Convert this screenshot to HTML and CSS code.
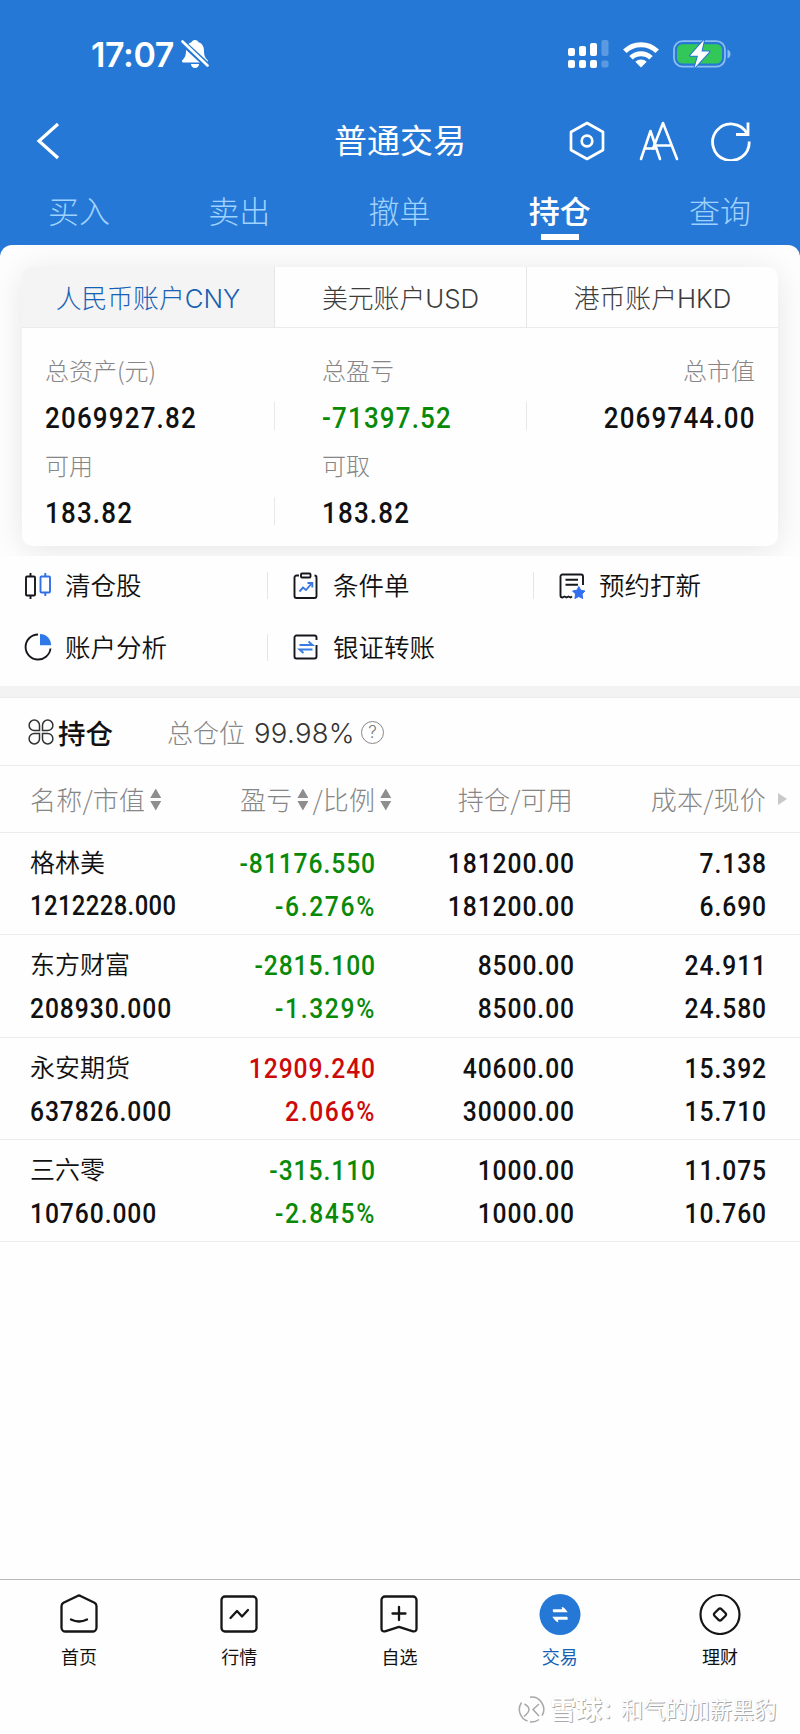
FILE: index.html
```html
<!DOCTYPE html>
<html lang="zh-CN">
<head>
<meta charset="UTF-8" />
<meta name="viewport" content="width=device-width, initial-scale=1" />
<title>普通交易</title>
<link rel="stylesheet" href="styles.css">
</head>
<body>
  <header>
    <div class="status-bar">
      <span class="time">17:07</span>
      <svg class="bell" width="28" height="30" viewBox="0 0 28 30">
        <path d="M14 1c-2 0-3.200 1-3.500 2.300C6.500 4.500 5 8 5 12c0 5-1.500 7-3.500 9-1 1.300-.5 2.500 1 2.500h23c1.500 0 2-1.200 1-2.500-2-2-3.500-4-3.500-9 0-4-1.500-7.500-5.500-8.700C17.200 2 16 1 14 1z" fill="#fff"/>
        <path d="M9.800 25h8.400c-.5 2.500-2 4-4.200 4s-3.700-1.500-4.200-4z" fill="#fff"/>
        <path d="M1 3l26 24" stroke="#2578d6" stroke-width="6"/>
        <path d="M1.500 2.500l25 24" stroke="#fff" stroke-width="2.600" stroke-linecap="round"/>
      </svg>
      <svg class="signal" width="41" height="28" viewBox="0 0 41 28" fill="#fff">
        <rect x="0" y="8" width="7" height="8" rx="2"/>
        <rect x="11" y="6" width="7" height="10" rx="2"/>
        <rect x="22" y="3" width="7" height="13" rx="2"/>
        <rect x="33.500" y="0" width="7" height="16" rx="2" opacity=".25"/>
        <rect x="0" y="20" width="7" height="8" rx="2"/>
        <rect x="11" y="20" width="7" height="8" rx="2"/>
        <rect x="22" y="20" width="7" height="8" rx="2"/>
        <rect x="33.500" y="20.500" width="7" height="7" rx="2" opacity=".25"/>
      </svg>
      <svg class="wifi" width="36" height="27" viewBox="0 0 36 27" fill="none" stroke="#fff" stroke-width="5">
        <path d="M1.800 10.300a23 23 0 0 1 32.400 0"/>
        <path d="M8 16.700a14.500 14.500 0 0 1 20 0"/>
        <path d="M18 26.500l-5.700-5.800a8.200 8.200 0 0 1 11.400 0z" fill="#fff" stroke="none"/>
      </svg>
      <svg class="battery" width="58" height="28" viewBox="0 0 58 28">
        <rect x="1" y="1.200" width="51" height="25.400" rx="8.500" fill="none" stroke="#8cbcf0" stroke-width="1.800"/>
        <rect x="4" y="4.200" width="45" height="19.400" rx="5.500" fill="#33c759"/>
        <path d="M54.500 9.500q3 1.200 3 4.400t-3 4.400z" fill="#8cbcf0"/>
        <path d="M31 0L17 15.700h8L21.500 28 36.500 11.500h-8z" fill="#fff" stroke="#2578d6" stroke-width="2" paint-order="stroke" stroke-linejoin="round"/>
      </svg>
    </div>

    <div class="title-bar">
      <svg class="back" width="24" height="38" viewBox="0 0 24 38" fill="none" stroke="#fff" stroke-width="3.200">
        <path d="M22 2L3 19l19 17"/>
      </svg>
      <h1>普通交易</h1>
      <div class="tools">
        <svg width="40" height="40" viewBox="0 0 40 40" fill="none" stroke="#fff" stroke-width="2.700" stroke-linejoin="round">
          <path d="M20 2l16 9v18l-16 9-16-9V11z"/>
          <circle cx="20" cy="20" r="5.300"/>
        </svg>
        <svg width="40" height="40" viewBox="0 0 40 40" fill="none" stroke="#fff" stroke-width="2.600" stroke-linecap="round" stroke-linejoin="round">
          <path d="M2 38l9.500-28L21 38M5.500 27.500h11.500"/>
          <path d="M14 27.500L24 2l14 36M17.500 24.500h15"/>
        </svg>
        <svg width="40" height="40" viewBox="0 0 40 40" fill="none" stroke="#fff" stroke-width="2.800">
          <path d="M38.200 20.500A18.300 18.300 0 1 1 36 12.500"/>
          <path d="M37 1.500v12H25"/>
        </svg>
      </div>
    </div>

    <nav class="trade-tabs">
      <a>买入</a>
      <a>卖出</a>
      <a>撤单</a>
      <a class="active">持仓</a>
      <a>查询</a>
    </nav>
  </header>

  <main>
    <section class="account">
      <div class="account-card">
        <div class="account-tabs">
          <a class="active">人民币账户CNY</a>
          <a>美元账户USD</a>
          <a>港币账户HKD</a>
        </div>
        <div class="account-grid">
          <div class="cell">
            <label>总资产(元)</label>
            <strong><span>2069927.82</span></strong>
          </div>
          <div class="cell">
            <label>总盈亏</label>
            <strong class="down"><span>-71397.52</span></strong>
          </div>
          <div class="cell right">
            <label>总市值</label>
            <strong><span>2069744.00</span></strong>
          </div>
          <div class="cell">
            <label>可用</label>
            <strong><span>183.82</span></strong>
          </div>
          <div class="cell last">
            <label>可取</label>
            <strong><span>183.82</span></strong>
          </div>
        </div>
      </div>
    </section>

    <section class="shortcuts">
      <a class="sep">
        <svg width="28" height="28" viewBox="0 0 28 28" fill="none" stroke="#15171c" stroke-width="1.900">
          <rect x="2" y="4.500" width="9" height="19" rx="1"/>
          <path d="M6.500 1v3.500M6.500 23.500V27"/>
          <g stroke="#2f6fe8"><rect x="16.500" y="4.500" width="9.500" height="16" rx="1"/><path d="M21.300 1v3.500M21.300 20.500V24"/></g>
        </svg>
        <span>清仓股</span>
      </a>
      <a class="sep">
        <svg width="28" height="28" viewBox="0 0 28 28" fill="none" stroke="#15171c" stroke-width="1.900">
          <path d="M7 3.500H4.500a2 2 0 0 0-2 2V24a2 2 0 0 0 2 2h18a2 2 0 0 0 2-2V5.500a2 2 0 0 0-2-2"/>
          <rect x="9" y="1.500" width="9.500" height="4" rx="1"/>
          <g stroke="#3a76e0"><path d="M7.500 19.500l3.500-4 3 2.500 6-7"/><path d="M15.500 11h4.800v4.500"/></g>
        </svg>
        <span>条件单</span>
      </a>
      <a>
        <svg width="28" height="28" viewBox="0 0 28 28" fill="none" stroke="#15171c" stroke-width="1.900">
          <path d="M25 13V4.500a2 2 0 0 0-2-2H4.500a2 2 0 0 0-2 2V23.500a2 2 0 0 0 2 2l2-1 2 1 2-1 2 1 1.500-1"/>
          <path d="M7.500 7.800h12.500M7.500 12.700h12.500"/>
          <path d="M20.800 14.500l2 3.800 4.200.7-3 3 .7 4.500-3.900-2-3.900 2 .7-4.500-3-3 4.200-.7z" fill="#2f6ff0" stroke="#2f6ff0" stroke-width="1" stroke-linejoin="round"/>
        </svg>
        <span>预约打新</span>
      </a>
      <a class="sep">
        <svg width="28" height="28" viewBox="0 0 28 28" fill="none">
          <path d="M14 1.500a12.500 12.500 0 1 0 12.500 14" stroke="#15171c" stroke-width="1.900"/>
          <path d="M16 1a11 11 0 0 1 11 11.200H16z" fill="#2f78e8"/>
        </svg>
        <span>账户分析</span>
      </a>
      <a>
        <svg width="28" height="28" viewBox="0 0 28 28" fill="none" stroke="#15171c" stroke-width="1.900">
          <path d="M24.500 7V4.500a2 2 0 0 0-2-2h-18a2 2 0 0 0-2 2v19a2 2 0 0 0 2 2h18a2 2 0 0 0 2-2V12"/>
          <g stroke="#3a7de0"><path d="M7.500 12h13L16.500 8.500M20.500 16.500h-13l4 3.500"/></g>
        </svg>
        <span>银证转账</span>
      </a>
    </section>

    <section class="holdings">
      <div class="holdings-head">
        <svg width="26" height="26" viewBox="0 0 26 26" fill="none" stroke="#333" stroke-width="1.500">
          <path d="M11.500 11.500H6.300A5.200 5.200 0 1 1 11.500 6.300z"/>
          <path d="M14.500 11.500h5.200a5.200 5.200 0 1 0-5.200-5.200z"/>
          <path d="M11.500 14.500H6.300a5.200 5.200 0 1 0 5.200 5.200z"/>
          <path d="M14.500 14.500h5.200a5.200 5.200 0 1 1-5.200 5.200z"/>
        </svg>
        <h2>持仓</h2>
        <span class="pos-label">总仓位</span>
        <span class="pos-value">99.98%</span>
        <span class="help">?</span>
      </div>

      <div class="row table-head">
        <div>名称/市值<i class="sort"></i></div>
        <div>盈亏<i class="sort"></i>/比例<i class="sort"></i></div>
        <div>持仓/可用</div>
        <div>成本/现价<i class="more"></i></div>
      </div>

      <div class="row">
        <div><b>格林美</b><span class="long">1212228.000</span></div>
        <div class="down"><span>-81176.550</span><span class="rate">-6.276%</span></div>
        <div><span>181200.00</span><span>181200.00</span></div>
        <div><span>7.138</span><span>6.690</span></div>
      </div>
      <div class="row">
        <div><b>东方财富</b><span>208930.000</span></div>
        <div class="down"><span>-2815.100</span><span class="rate">-1.329%</span></div>
        <div><span>8500.00</span><span>8500.00</span></div>
        <div><span>24.911</span><span>24.580</span></div>
      </div>
      <div class="row">
        <div><b>永安期货</b><span>637826.000</span></div>
        <div class="up"><span>12909.240</span><span class="rate">2.066%</span></div>
        <div><span>40600.00</span><span>30000.00</span></div>
        <div><span>15.392</span><span>15.710</span></div>
      </div>
      <div class="row">
        <div><b>三六零</b><span>10760.000</span></div>
        <div class="down"><span>-315.110</span><span class="rate">-2.845%</span></div>
        <div><span>1000.00</span><span>1000.00</span></div>
        <div><span>11.075</span><span>10.760</span></div>
      </div>
    </section>
  </main>

  <footer>
    <nav class="bottom-nav">
      <a>
        <svg width="42" height="42" viewBox="0 0 42 42" fill="none" stroke="#151515" stroke-width="2.300" stroke-linecap="round" stroke-linejoin="round">
          <path d="M19.500 3Q21 2 22.500 3l14 6.800q2 1.200 2 3.400V34.500a4 4 0 0 1-4 4h-27a4 4 0 0 1-4-4V13.200q0-2.200 2-3.400z"/>
          <path d="M13 26.500q8 4 16 0"/>
        </svg>
        首页
      </a>
      <a>
        <svg width="42" height="42" viewBox="0 0 42 42" fill="none" stroke="#151515" stroke-width="2.300" stroke-linecap="round" stroke-linejoin="round">
          <rect x="3.500" y="3.500" width="35" height="35" rx="3.500"/>
          <path d="M12.500 25l6.500-7 5 5.500 6-6.500"/>
        </svg>
        行情
      </a>
      <a>
        <svg width="42" height="42" viewBox="0 0 42 42" fill="none" stroke="#151515" stroke-width="2.300" stroke-linecap="round" stroke-linejoin="round">
          <path d="M7 3.500h28a3.500 3.500 0 0 1 3.500 3.500v28.500q0 3.500-3.500 2.800l-14-4.500-14 4.500q-3.500.7-3.500-2.800V7A3.500 3.500 0 0 1 7 3.500z"/>
          <path d="M14.500 20.500h13M21 14v13"/>
        </svg>
        自选
      </a>
      <a class="active">
        <svg width="42" height="42" viewBox="0 0 42 42">
          <circle cx="21" cy="21.500" r="20.500" fill="#2578d6"/>
          <path d="M14 16.300h9l-.3-2.300q2.500 0 6 5.200H14.500q-1.300-1-.5-2.900zM28.500 26.800h-9.500l.3 2.600q-2.500-.5-6-5.600h14.700q1.300 1 .5 3z" fill="#fff"/>
        </svg>
        交易
      </a>
      <a>
        <svg width="42" height="42" viewBox="0 0 42 42" fill="none" stroke="#151515" stroke-width="2.200">
          <circle cx="21" cy="21.500" r="19.500"/>
          <rect x="16.200" y="16.700" width="9.600" height="9.600" rx="2" transform="rotate(45 21 21.500)"/>
        </svg>
        理财
      </a>
    </nav>
    <div class="watermark">
      <svg width="27" height="27" viewBox="0 0 27 27" fill="none" stroke="#a8a8a8" stroke-width="1.500">
        <path d="M3.500 6.500a12.300 12.300 0 0 0 6 18.500M12 1.200a12.300 12.300 0 0 1 12 18.500M21 23.500a12.300 12.300 0 0 1-9 2.300"/>
        <path d="M6.500 8q4.500 2.500 4.500 5.500T6 20.500M21 8l-6 5.500 6 6.500"/>
      </svg>
      <em>雪球</em><span class="colon">：</span><span>和气的加薪黑豹</span>
    </div>
  </footer>
</body>
</html>
```

FILE: styles.css
```css
* {
  box-sizing: border-box;
}
body {
  margin: 0;
  width: 800px;
  height: 1734px;
  display: flex;
  flex-direction: column;
  background: #fefefe;
  color: #111;
  font-family: 'Noto Sans CJK SC', sans-serif;
  font-weight: 300;
}
h1, h2 {
  margin: 0;
}
svg {
  display: block;
  flex: none;
}
header {
  background: #2578d6;
  height: 257px;
  flex: none;
}

/* phone status bar */
.status-bar {
  display: flex;
  align-items: center;
  height: 108px;
  padding-left: 91px;
}
.time {
  width: 90px;
  font-family: Inter, sans-serif;
  font-size: 34px;
  font-weight: 600;
  letter-spacing: -0.4px;
  line-height: 44px;
  padding-top: 1px;
  color: #fff;
}
.signal {
  margin-left: 359px;
}
.wifi {
  margin-left: 14px;
}
.battery {
  margin-left: 14px;
}

.title-bar {
  display: grid;
  grid-template-columns: 1fr 140px 1fr;
  align-items: center;
  height: 66px;
  color: #fff;
}
.back {
  margin-left: 36px;
}
h1 {
  padding-bottom: 3px;
  font-size: 33px;
  line-height: 45px;
  font-weight: 400;
  text-align: center;
  white-space: nowrap;
}
.tools {
  display: flex;
  justify-content: flex-end;
  gap: 32px;
  padding-right: 49px;
}
.trade-tabs {
  display: grid;
  grid-template-columns: repeat(5, 1fr);
  justify-items: center;
  margin-left: -1px;
  padding-top: 13px;
  font-size: 31px;
  line-height: 46px;
  color: #9fd2ff;
}
.trade-tabs .active {
  color: #fff;
  font-weight: 500;
}
.trade-tabs .active::after {
  content: '';
  display: block;
  width: 38px;
  height: 6px;
  margin: 1px auto 0;
  background: #fff;
}

/* account summary */
main {
  flex: 1;
  margin-top: -12px;
  background: #fefefe;
  border-radius: 12px 12px 0 0;
}
.account {
  height: 311px;
  padding: 22px 22px 0;
  overflow: hidden;
  border-radius: 12px 12px 0 0;
}
.account-card {
  height: 279px;
  background: #fefefe;
  border-radius: 10px;
  box-shadow: 0 4px 34px rgba(0, 0, 0, 0.1);
  overflow: hidden;
}
.account-tabs {
  display: grid;
  grid-template-columns: 252px 252px 1fr;
  height: 61px;
  border-bottom: 1px solid #ebebeb;
  font-family: Inter, 'Noto Sans CJK SC', sans-serif;
  font-size: 25.800px;
  line-height: 64px;
  text-align: center;
  color: #3c3c3c;
}
.account-tabs a {
  height: 60px;
}
.account-tabs a + a {
  border-left: 1px solid #e6e6e6;
}
.account-tabs .active {
  background: #f4f4f4;
  color: #1761b4;
}
.account-grid {
  display: grid;
  grid-template-columns: 253px 252px 1fr;
  padding-top: 24px;
}
.cell {
  height: 95px;
  padding-left: 23px;
}
.cell + .cell {
  padding-left: 47px;
}
.cell:nth-child(4) {
  padding-left: 23px;
}
.cell.right {
  padding: 0 23px 0 0;
  text-align: right;
}
.cell label {
  display: block;
  font-size: 24px;
  line-height: 36px;
  color: #868686;
}
.cell strong {
  display: block;
  height: 28px;
  margin-top: 14px;
  margin-bottom: 17px;
  font-family: Roboto, sans-serif;
  font-size: 29.500px;
  line-height: 32px;
  font-weight: 500;
  border-right: 1px solid #e8e8e8;
}
.cell.right strong, .cell.last strong {
  border-right: none;
}
/* narrow DIN-like digits */
.cell strong span {
  display: inline-block;
  letter-spacing: 1.350px;
  transform: scaleX(0.88);
  transform-origin: 0 50%;
}
.cell.right strong span {
  margin-right: -1px;
  transform-origin: 100% 50%;
}
.down, .cell .down {
  color: #088a08;
}
.up {
  color: #cc0a0a;
}

/* shortcuts */
.shortcuts {
  display: grid;
  grid-template-columns: 268px 266px 266px;
  grid-auto-rows: 61.500px;
  height: 130px;
  margin-top: -1px;
  margin-bottom: 1px;
}
.shortcuts a {
  display: flex;
  align-items: center;
  gap: 13px;
  padding-left: 24px;
  font-size: 25.500px;
  font-weight: 350;
  line-height: 38px;
}
.shortcuts span {
  padding-bottom: 3px;
}
.shortcuts .sep::after {
  content: '';
  width: 1px;
  height: 27px;
  margin-left: auto;
  background: #e6e6e6;
}

/* holdings table */
.holdings {
  border-top: 11px solid #f3f3f3;
}
.holdings-head {
  display: flex;
  align-items: center;
  height: 69px;
  padding-left: 28px;
  border-top: 1px solid #ebebeb;
  border-bottom: 1px solid #ebebeb;
}
h2 {
  margin-left: 4px;
  font-size: 27.500px;
  line-height: 40px;
  font-weight: 500;
}
.pos-label {
  margin-left: 54px;
  font-size: 26px;
  line-height: 38px;
  color: #868686;
}
.pos-value {
  width: 107px;
  margin-left: 9px;
  padding-top: 2px;
  font-family: Inter, sans-serif;
  font-size: 27.500px;
  font-weight: 300;
  letter-spacing: 0.300px;
  color: #333;
}
.help {
  width: 23px;
  height: 23px;
  margin-top: 1px;
  border: 1.500px solid #888;
  border-radius: 50%;
  font-family: Inter, sans-serif;
  font-size: 17px;
  line-height: 21px;
  text-align: center;
  color: #777;
}
.row {
  display: grid;
  grid-template-columns: 180px 166px 199px 192px;
  height: 102.300px;
  padding: 7px 0 0 30px;
  border-bottom: 1px solid #ececec;
}
.row > div {
  text-align: right;
}
.row > div:first-child {
  text-align: left;
}
.row b, .row span {
  display: block;
  height: 43px;
  line-height: 47px;
  white-space: nowrap;
}
.row b {
  font-size: 25px;
  line-height: 42px;
  font-weight: 350;
}
.row span {
  font-family: Roboto, sans-serif;
  font-size: 28px;
  font-weight: 500;
  letter-spacing: 1.050px;
  transform: scaleX(0.88);
  transform-origin: 100% 50%;
}
.row > div:first-child span {
  transform-origin: 0 50%;
}
.row .long {
  font-size: 27px;
  letter-spacing: 0.500px;
}
.row .rate {
  letter-spacing: 1.900px;
}
.row.table-head {
  grid-template-columns: 210px 150px 183px 214px;
  height: 67px;
  padding-top: 0;
  font-size: 26px;
  line-height: 65px;
  letter-spacing: 0.200px;
  color: #868686;
}
.table-head > div {
  display: flex;
  align-items: center;
  height: 65px;
  white-space: nowrap;
}
.table-head > div:nth-child(3), .table-head > div:nth-child(4) {
  justify-content: flex-end;
}
.sort {
  flex: none;
  width: 11px;
  height: 22px;
  margin: 2px 4px 0 5px;
  background: #8e8e8e;
  clip-path: polygon(50% 0, 100% 43%, 0 43%, 0 57%, 100% 57%, 50% 100%, 0 57%, 0 43%);
}
.more {
  margin-left: 12px;
  border-left: 9px solid #c9c9c9;
  border-top: 6px solid transparent;
  border-bottom: 6px solid transparent;
}

/* bottom navigation */
footer {
  height: 155px;
  flex: none;
  border-top: 1px solid #b8b8b8;
}
.bottom-nav {
  display: grid;
  grid-template-columns: repeat(5, 1fr);
  height: 108px;
  margin-left: -1px;
  padding-top: 13px;
}
.bottom-nav a {
  display: flex;
  flex-direction: column;
  align-items: center;
  gap: 8px;
  font-size: 18px;
  line-height: 27px;
  font-weight: 400;
}
.bottom-nav .active {
  color: #1761b4;
}
.watermark {
  display: flex;
  align-items: center;
  height: 42px;
  padding-left: 518px;
  font-size: 22.200px;
  font-weight: 400;
  line-height: 38px;
  white-space: nowrap;
  color: #fff;
  text-shadow: 1px 1px 0 #aaa, 0 0 1px #ddd;
}
.watermark span {
  padding-bottom: 3px;
}
.watermark em {
  margin-left: 5px;
  padding-bottom: 3px;
  font-size: 26px;
  font-style: normal;
  font-weight: 700;
}
.watermark .colon {
  width: 19px;
}
```
